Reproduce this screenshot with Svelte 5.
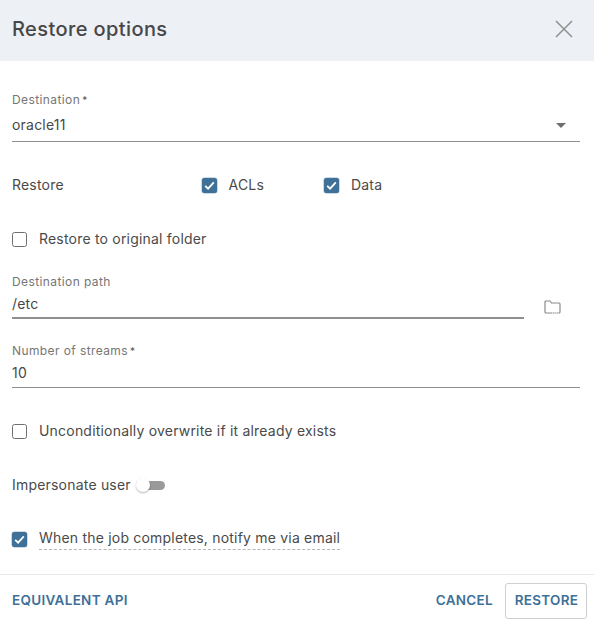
<script>
  const check = 'M3.2 7.8 L6.1 10.7 L11.8 4.4';
</script>

<div class="dialog">
  <header class="head">
    <h1>Restore options</h1>
    <svg class="close" width="18" height="18" viewBox="0 0 18 18" aria-label="Close"><path d="M1 1 L17 17 M17 1 L1 17" /></svg>
  </header>

  <main class="body">
    <div class="field first">
      <span class="label">Destination<i>*</i></span>
      <div class="value"><span>oracle11</span><span class="caret"></span></div>
    </div>

    <div class="restore-row">
      <span class="text restore-name">Restore</span>
      <span class="check acl">
        <svg class="box on" viewBox="0 0 15 15"><path d={check} /></svg>
        <span class="text">ACLs</span>
      </span>
      <span class="check">
        <svg class="box on" viewBox="0 0 15 15"><path d={check} /></svg>
        <span class="text">Data</span>
      </span>
    </div>

    <div class="check original">
      <span class="box off"></span>
      <span class="text">Restore to original folder</span>
    </div>

    <div class="path-row">
      <div class="field grow">
        <span class="label">Destination path</span>
        <div class="value thick"><span>/etc</span></div>
      </div>
      <svg class="folder" width="17" height="14" viewBox="0 0 17 14">
        <path class="fold" d="M1 12 V2 a1 1 0 0 1 1-1 H6 L7.5 3 H15 a1 1 0 0 1 1 1 V12 a1 1 0 0 1-1 1 H2 a1 1 0 0 1-1-1 Z" />
        <path class="dots" d="M8 13 H15" />
      </svg>
    </div>

    <div class="field streams">
      <span class="label">Number of streams<i>*</i></span>
      <div class="value tight"><span>10</span></div>
    </div>

    <div class="check overwrite">
      <span class="box off"></span>
      <span class="text">Unconditionally overwrite if it already exists</span>
    </div>

    <div class="impersonate">
      <span class="text">Impersonate user</span>
      <span class="toggle"><span class="knob"></span></span>
    </div>

    <div class="check notify">
      <svg class="box on" viewBox="0 0 15 15"><path d={check} /></svg>
      <span class="text dashed">When the job completes, notify me via email</span>
    </div>
  </main>

  <footer class="foot">
    <span class="action">EQUIVALENT API</span>
    <div class="right">
      <span class="action">CANCEL</span>
      <span class="action btn">RESTORE</span>
    </div>
  </footer>
</div>

<style>
  :global(body) {
    margin: 0;
    background: #fff;
  }
  .dialog {
    width: 594px;
    height: 627px;
    display: flex;
    flex-direction: column;
    font-family: Inter, "Liberation Sans", sans-serif;
    color: #3f3f3f;
    overflow: hidden;
  }
  .head {
    height: 61px;
    flex: none;
    background: #edf0f5;
    display: flex;
    align-items: center;
    justify-content: space-between;
    padding: 0 21px 3px 12px;
    box-sizing: border-box;
  }
  h1 {
    margin: 0;
    font-size: 20px;
    font-weight: 500;
    letter-spacing: 0.4px;
    color: #474747;
  }
  .close path {
    stroke: #8f8f8f;
    stroke-width: 1.5;
    fill: none;
  }
  .body {
    flex: 1;
    padding: 0 14px 0 12px;
    display: flex;
    flex-direction: column;
  }
  .field {
    display: flex;
    flex-direction: column;
  }
  .first {
    margin-top: 32px;
  }
  .label {
    font-size: 12px;
    line-height: 14px;
    letter-spacing: 0.4px;
    color: #767676;
  }
  .label i {
    font-style: normal;
    font-size: 10px;
    margin-left: 2px;
    color: #555;
  }
  .value {
    font-size: 14px;
    letter-spacing: 0.2px;
    line-height: 20px;
    margin-top: 8px;
    padding-bottom: 6px;
    border-bottom: 1px solid #8e8e8e;
    color: #474747;
    display: flex;
    justify-content: space-between;
    align-items: center;
  }
  .thick {
    border-bottom-width: 2px;
    padding-bottom: 3px;
    margin-top: 5px;
  }
  .tight {
    margin-top: 5px;
    padding-bottom: 4px;
  }
  .caret {
    width: 0;
    height: 0;
    border-left: 5px solid transparent;
    border-right: 5px solid transparent;
    border-top: 5px solid #6f6f6f;
    margin-right: 14px;
  }
  .text {
    font-size: 14px;
    letter-spacing: 0.2px;
    line-height: 20px;
    color: #4a4a4a;
  }
  .check {
    display: flex;
    align-items: center;
    gap: 12px;
  }
  .box {
    width: 15px;
    height: 15px;
    box-sizing: border-box;
    border-radius: 2.5px;
    flex: none;
  }
  .box.on {
    background: #3e7098;
    display: block;
    box-shadow: 0 0 0 0.5px rgba(62, 112, 152, 0.5);
  }
  .box.on path {
    fill: none;
    stroke: #fff;
    stroke-width: 1.8;
  }
  .box.off {
    border: 1.5px solid #6f6f6f;
  }
  .restore-row {
    display: flex;
    align-items: center;
    margin-top: 33px;
  }
  .restore-name {
    width: 189.5px;
  }
  .acl {
    width: 122.5px;
  }
  .original {
    margin-top: 34px;
  }
  .path-row {
    display: flex;
    align-items: flex-end;
    margin-top: 26px;
  }
  .grow {
    width: 512px;
  }
  .folder {
    margin-left: 20px;
    margin-bottom: 5px;
  }
  .fold {
    fill: none;
    stroke: #8a8a8a;
    stroke-width: 1.2;
  }
  .dots {
    fill: none;
    stroke: #fff;
    stroke-width: 1;
    stroke-dasharray: 1 1.2;
  }
  .streams {
    margin-top: 25px;
  }
  .overwrite {
    margin-top: 33px;
  }
  .impersonate {
    margin-top: 34px;
    display: flex;
    align-items: center;
    gap: 4px;
  }
  .toggle {
    position: relative;
    width: 30px;
    height: 9px;
    display: block;
  }
  .toggle::after {
    content: "";
    position: absolute;
    left: 8px;
    right: 0;
    top: 0;
    bottom: 0;
    border-radius: 5px;
    background: #9a9a9a;
  }
  .knob {
    position: absolute;
    z-index: 1;
    left: 1px;
    top: -3px;
    width: 14px;
    height: 14px;
    border-radius: 50%;
    background: #fff;
    box-shadow: 0 1px 2px rgba(0, 0, 0, 0.3);
  }
  .notify {
    margin-top: 33px;
  }
  .dashed {
    border-bottom: 1px dashed #b5b5b5;
    padding-bottom: 1px;
  }
  .foot {
    flex: none;
    height: 53px;
    box-sizing: border-box;
    border-top: 1px solid #e8e8e8;
    display: flex;
    align-items: center;
    justify-content: space-between;
    padding: 0 7px 0 12px;
  }
  .right {
    display: flex;
    align-items: center;
    gap: 12px;
  }
  .action {
    font-size: 13.5px;
    font-weight: 600;
    letter-spacing: 0.3px;
    color: #3e7098;
    padding-bottom: 2px;
  }
  .btn {
    width: 82px;
    height: 36px;
    box-sizing: border-box;
    border: 1px solid #cfcfcf;
    border-radius: 3px;
    display: flex;
    align-items: center;
    justify-content: center;
    padding-left: 1px;
  }
</style>
